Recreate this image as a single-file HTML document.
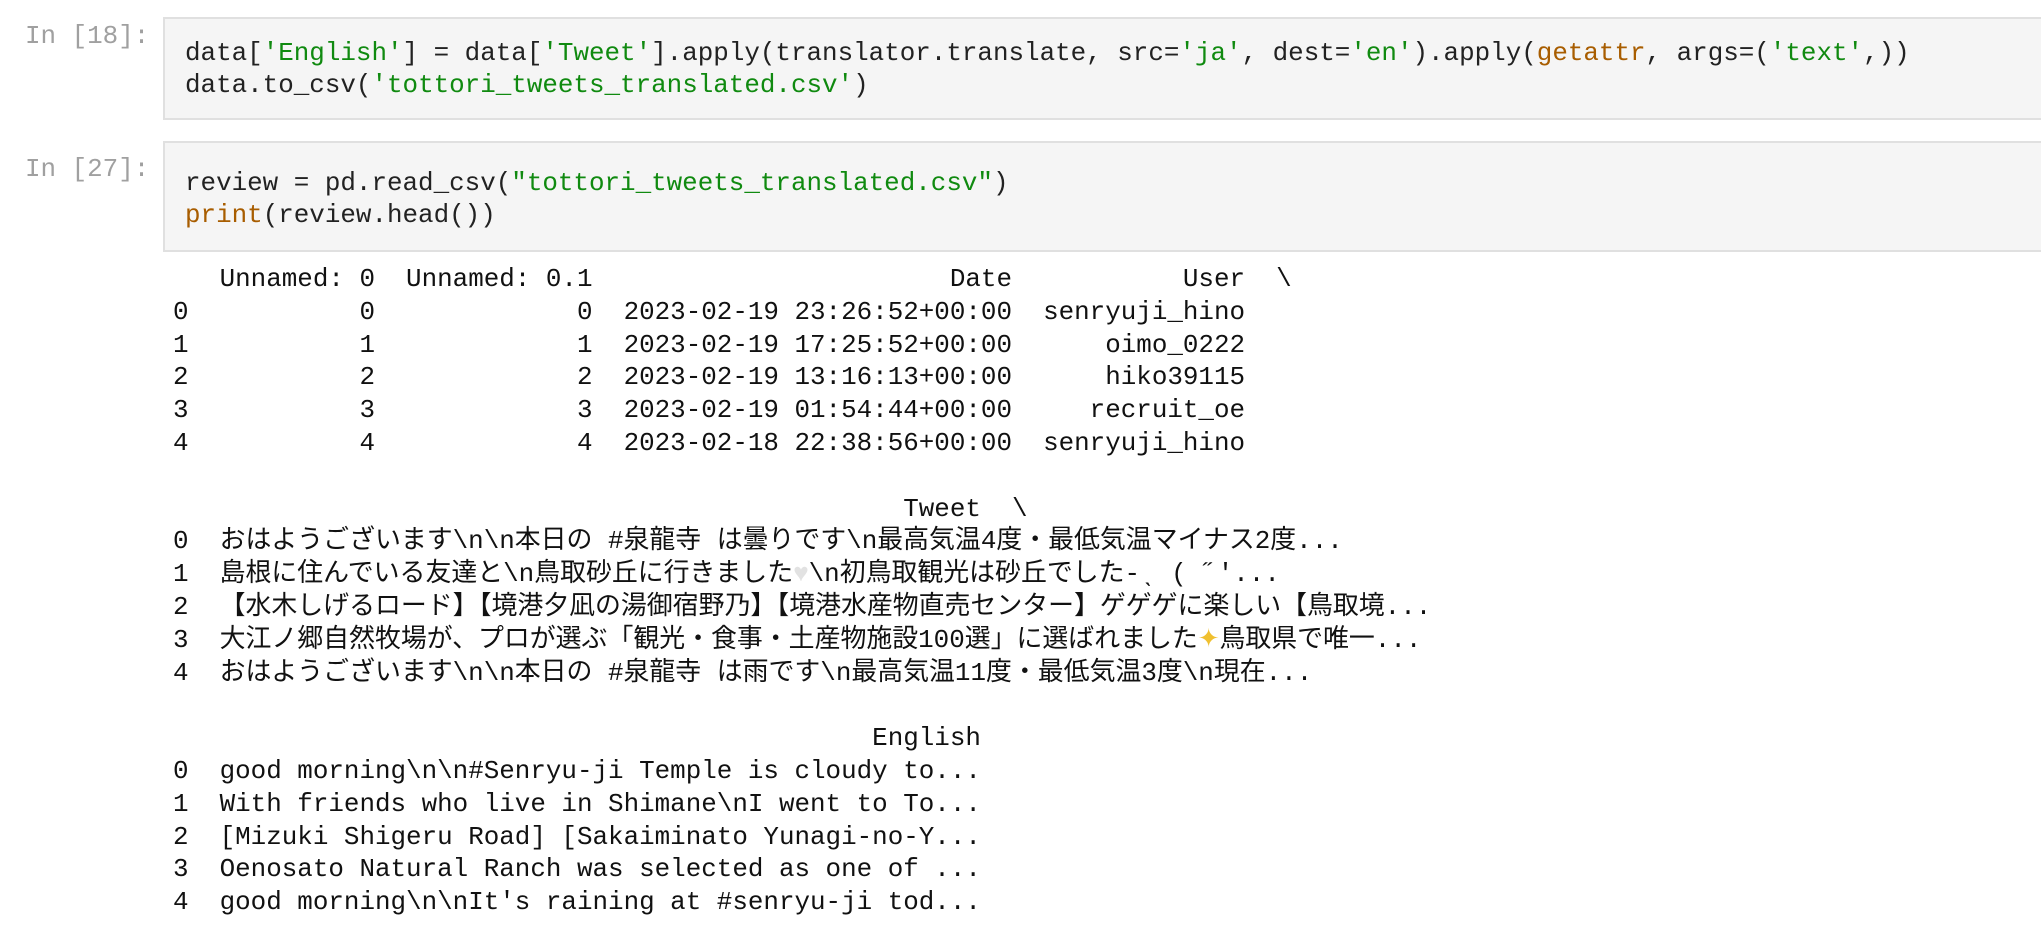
<!DOCTYPE html>
<html><head><meta charset="utf-8">
<style>
html,body{margin:0;padding:0;background:#fff;width:2041px;height:926px;overflow:hidden;position:relative}
.mono{font-family:"Liberation Mono","Noto Sans CJK JP",monospace;font-size:25.9px;white-space:pre;}
.prompt{position:absolute;left:25px;color:#a0a0a0;line-height:34px;}
.cell{position:absolute;left:163px;width:1900px;background:#f5f5f5;border:2px solid #e0e0e0;box-sizing:border-box;}
.code{position:absolute;left:185px;line-height:32px;color:#222;}
.s{color:#108a10}
.b{color:#a85d00}
.out{position:absolute;left:173px;top:263px;line-height:32.8px;color:#111;}
.heart{color:#e2e2e2}
.spark{color:#f0c030}
</style></head><body>
<div class="mono prompt" style="top:19px">In [18]:</div>
<div class="cell" style="top:17px;height:103px"></div>
<div class="mono code" style="top:37px">data[<span class="s">'English'</span>] = data[<span class="s">'Tweet'</span>].apply(translator.translate, src=<span class="s">'ja'</span>, dest=<span class="s">'en'</span>).apply(<span class="b">getattr</span>, args=(<span class="s">'text'</span>,))
data.to_csv(<span class="s">'tottori_tweets_translated.csv'</span>)</div>

<div class="mono prompt" style="top:152px">In [27]:</div>
<div class="cell" style="top:141px;height:111px"></div>
<div class="mono code" style="top:167px">review = pd.read_csv(<span class="s">"tottori_tweets_translated.csv"</span>)
<span class="b">print</span>(review.head())</div>

<div class="mono out">   Unnamed: 0  Unnamed: 0.1                       Date           User  \
0           0             0  2023-02-19 23:26:52+00:00  senryuji_hino
1           1             1  2023-02-19 17:25:52+00:00      oimo_0222
2           2             2  2023-02-19 13:16:13+00:00      hiko39115
3           3             3  2023-02-19 01:54:44+00:00     recruit_oe
4           4             4  2023-02-18 22:38:56+00:00  senryuji_hino

                                               Tweet  \
0  おはようございます\n\n本日の #泉龍寺 は曇りです\n最高気温4度・最低気温マイナス2度...
1  島根に住んでいる友達と\n鳥取砂丘に行きました<span class="heart">♥</span>\n初鳥取観光は砂丘でした-ˎ ( ˝'...
2  【水木しげるロード】【境港夕凪の湯御宿野乃】【境港水産物直売センター】ゲゲゲに楽しい【鳥取境...
3  大江ノ郷自然牧場が、プロが選ぶ「観光・食事・土産物施設100選」に選ばれました<span class="spark">✦</span>鳥取県で唯一...
4  おはようございます\n\n本日の #泉龍寺 は雨です\n最高気温11度・最低気温3度\n現在...

                                             English
0  good morning\n\n#Senryu-ji Temple is cloudy to...
1  With friends who live in Shimane\nI went to To...
2  [Mizuki Shigeru Road] [Sakaiminato Yunagi-no-Y...
3  Oenosato Natural Ranch was selected as one of ...
4  good morning\n\nIt's raining at #senryu-ji tod...</div>
</body></html>
